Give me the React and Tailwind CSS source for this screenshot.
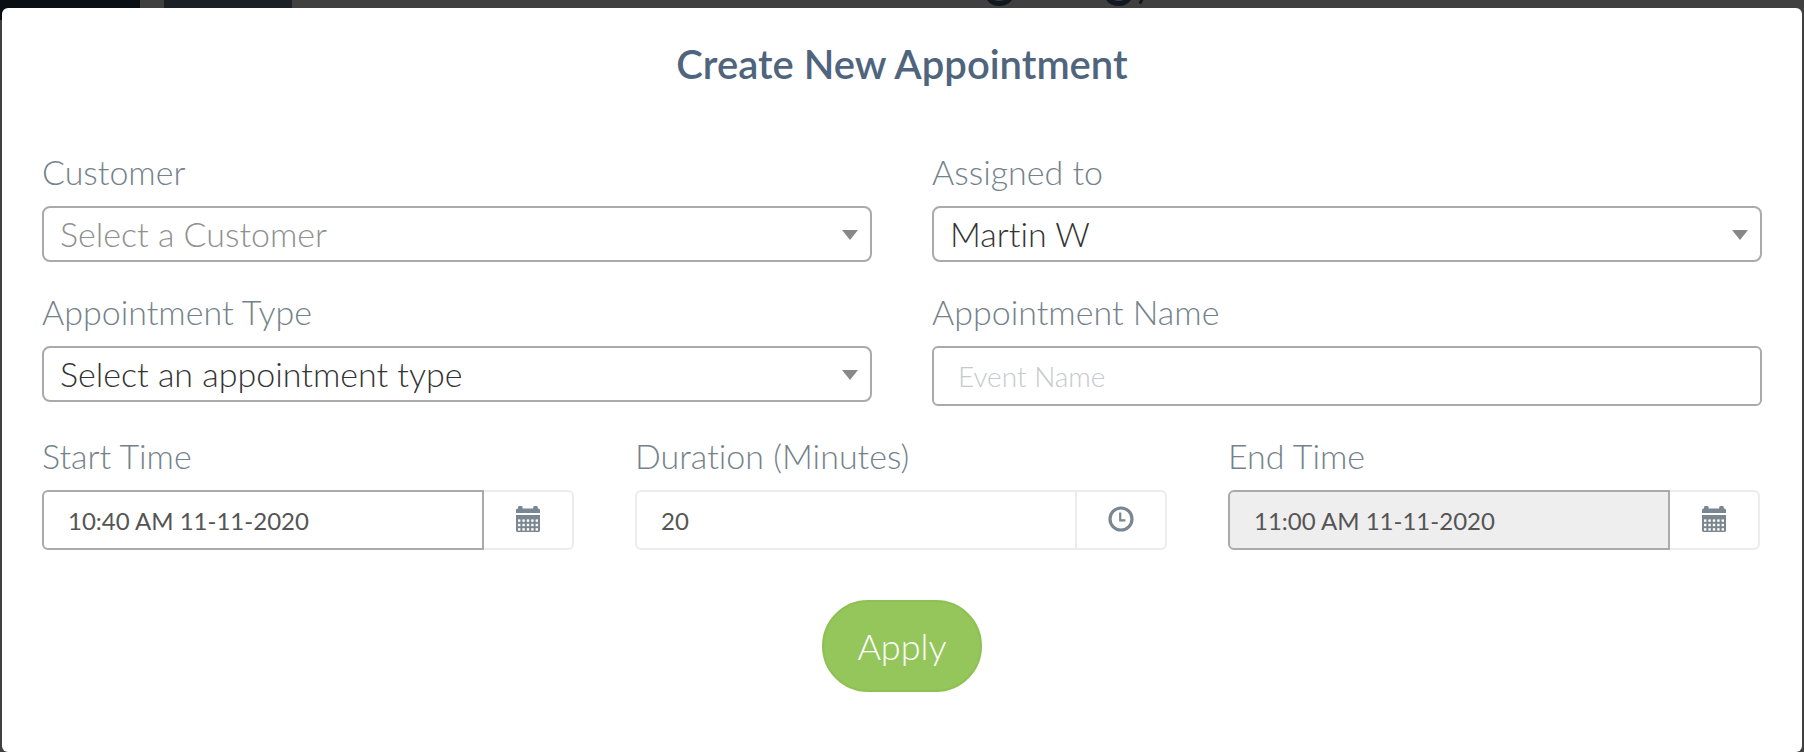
import React from "react";

const labelClass = "block mb-[14px] text-[34px] leading-10 font-light text-[#74828b]";
const inputClass =
  "block min-w-0 w-full h-[60px] border-2 px-6 leading-9 outline-none text-[#555] placeholder:text-[#c4cacd] placeholder:opacity-100";

function SelectField({ id, label, options, muted }) {
  return (
    <div>
      <label htmlFor={id} className={labelClass}>{label}</label>
      <div className="relative">
        <select
          id={id}
          className={
            "block w-full h-14 appearance-none rounded-lg border-2 border-[#aaa] bg-white pl-4 pr-12 text-[34px] leading-10 font-light outline-none " +
            (muted ? "text-[#909090]" : "text-[#333]")
          }
        >
          {options.map((o) => (
            <option key={o}>{o}</option>
          ))}
        </select>
        <svg className="pointer-events-none absolute right-[14px] top-6 h-[10px] w-4" viewBox="0 0 16 10" aria-hidden="true">
          <path d="M0 0H16L8 10Z" fill="#888" />
        </svg>
      </div>
    </div>
  );
}

function CalendarIcon() {
  const cols = [2, 6.4, 10.8, 15.2, 19.6];
  const rows = [13.4, 17.8, 22.2];
  return (
    <svg className="h-[26px] w-6" viewBox="0 0 24 26" aria-hidden="true">
      <path
        d="M0 7V4Q0 2.4 1.6 2.4H2V1.4Q2 0 3.4 0H5.2Q6.6 0 6.6 1.4V2.4H17.2V1.4Q17.2 0 18.6 0H20.4Q21.8 0 21.8 1.4V2.4H22.4Q24 2.4 24 4V7Z"
        fill="#7a8790"
      />
      <path d="M0 9H24V24.6Q24 26 22.6 26H1.4Q0 26 0 24.6Z" fill="#7a8790" />
      {rows.map((y) => cols.map((x) => <rect key={x + "-" + y} x={x} y={y} width="2.4" height="2.4" fill="#fff" />))}
    </svg>
  );
}

function ClockIcon() {
  return (
    <svg className="h-[26px] w-[26px]" viewBox="0 0 26 26" fill="none" stroke="#7a8790" aria-hidden="true">
      <circle cx="13" cy="13" r="11" strokeWidth="3.2" />
      <path d="M12.2 6.6V14.3H17.4" strokeWidth="2.2" />
    </svg>
  );
}

function GroupField({ id, label, value, icon, action, tone, readOnly }) {
  return (
    <div className="min-w-0">
      <label htmlFor={id} className={labelClass}>{label}</label>
      <div className="flex">
        <input id={id} defaultValue={value} readOnly={readOnly} className={inputClass + " flex-1 rounded-l-md text-2xl " + tone} />
        <button
          type="button"
          aria-label={action}
          className="flex h-[60px] w-[90px] shrink-0 items-center justify-center rounded-r-md border-2 border-l-0 border-[#ececec] bg-white pr-px pb-[2px]"
        >
          {icon}
        </button>
      </div>
    </div>
  );
}

export default function App() {
  return (
    <div className="relative min-h-screen bg-[#404040] px-[2px] pt-2 font-['Lato','Open_Sans',sans-serif] [font-variant-ligatures:none]">
      <div className="absolute inset-x-0 top-0 flex h-5 overflow-hidden" aria-hidden="true">
        <div className="w-[140px] bg-[#0a0f14]" />
        <div className="ml-6 h-2 w-32 bg-[#1c2126]" />
      </div>
      <svg className="absolute left-[980px] top-0 h-2 w-[170px]" viewBox="0 0 170 8" aria-hidden="true">
        <path d="M8 -3Q12 3.6 19 3.6Q27 3.6 31 -3M127 -3Q131 3.6 139 3.6Q146 3.6 150 -3" fill="none" stroke="#11181f" strokeWidth="5" />
        <path d="M160 3.6L162.500 -2" stroke="#11181f" strokeWidth="3" />
      </svg>
      <main role="dialog" aria-labelledby="dialog-title" className="relative min-h-[calc(100vh-8px)] rounded-md bg-white px-10 pt-8 pb-[60px]">
        <h1 id="dialog-title" className="text-center text-[40px] leading-[48px] font-semibold text-[#4f647d]">
          Create New Appointment
        </h1>
        <form className="mt-16" onSubmit={(e) => e.preventDefault()}>
          <div className="grid grid-cols-2 gap-x-[60px] gap-y-[30px]">
            <SelectField id="customer" label="Customer" options={["Select a Customer"]} muted />
            <SelectField id="assigned" label="Assigned to" options={["Martin W"]} />
            <SelectField id="type" label="Appointment Type" options={["Select an appointment type"]} />
            <div>
              <label htmlFor="name" className={labelClass}>Appointment Name</label>
              <input id="name" placeholder="Event Name" className={inputClass + " rounded-md border-[#aaa] text-[28px] font-light"} />
            </div>
          </div>
          <div className="mt-[30px] grid grid-cols-3 gap-x-[61px] pr-[2px]">
            <GroupField id="start" label="Start Time" value="10:40 AM 11-11-2020" icon={<CalendarIcon />} action="Pick start time" tone="border-[#aaa] bg-white" />
            <GroupField id="duration" label="Duration (Minutes)" value="20" icon={<ClockIcon />} action="Pick duration" tone="border-[#ececec] bg-white" />
            <GroupField id="end" label="End Time" value="11:00 AM 11-11-2020" icon={<CalendarIcon />} action="Pick end time" tone="border-[#aaa] bg-[#eee]" readOnly />
          </div>
          <div className="mt-[50px] flex justify-center">
            <button type="submit" className="h-[92px] w-40 rounded-full border-2 border-[#8ec152] bg-[#94c65c] text-[36px] leading-10 font-light text-white">
              Apply
            </button>
          </div>
        </form>
      </main>
    </div>
  );
}
